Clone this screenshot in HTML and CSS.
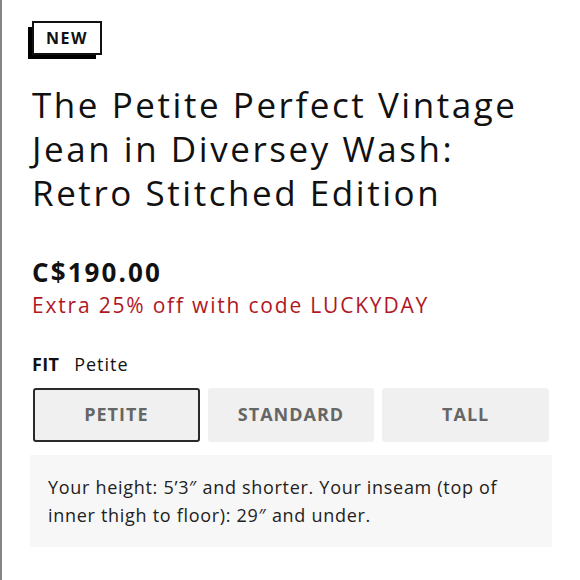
FILE: index.html
```html
<!DOCTYPE html>
<html lang="en">
<head>
<meta charset="utf-8">
<title>Product</title>
<link rel="stylesheet" href="styles.css">
</head>
<body>
<main class="page">
  <div class="badge-row"><span class="badge">NEW</span></div>
  <h1 class="title">The Petite Perfect Vintage<br>Jean in Diversey Wash:<br>Retro Stitched Edition</h1>
  <div class="price">C$190.00</div>
  <div class="promo">Extra 25% off with code LUCKYDAY</div>
  <div class="fit-label"><span class="fit-key">FIT</span><span class="fit-val">Petite</span></div>
  <div class="fit-options">
    <button class="fit-btn selected">PETITE</button>
    <button class="fit-btn">STANDARD</button>
    <button class="fit-btn">TALL</button>
  </div>
  <div class="fit-info">Your height: 5&#8217;3&#8243; and shorter. Your inseam (top of<br>inner thigh to floor): 29&#8243; and under.</div>
</main>
</body>
</html>
```
FILE: styles.css
```css
html, body {
  margin: 0;
  padding: 0;
  background: #fff;
}
body {
  font-family: "Open Sans", Lato, sans-serif;
  color: #111;
  border-left: 2px solid #858585;
  min-height: 580px;
  box-sizing: border-box;
}
.page {
  padding: 21px 30px 0 28px;
}
.badge-row {
  display: flex;
  padding-left: 2px;
}
.badge {
  display: inline-flex;
  align-items: center;
  justify-content: center;
  width: 70px;
  height: 34px;
  box-sizing: border-box;
  border: 2px solid #111;
  background: #fff;
  box-shadow: -5px 5px 0 -1px #000;
  font-weight: 700;
  font-size: 16px;
  letter-spacing: 1.6px;
  color: #111;
}
.title {
  margin: 28px 0 0 2px;
  font-weight: 400;
  font-size: 35px;
  line-height: 44px;
  letter-spacing: 2.55px;
  color: #111;
  white-space: nowrap;
}
.price {
  margin: 41px 0 0 2px;
  font-weight: 700;
  font-size: 26px;
  line-height: 32px;
  letter-spacing: 2.1px;
  color: #111;
}
.promo {
  margin: 2px 0 0 2px;
  font-size: 21px;
  line-height: 30px;
  letter-spacing: 1.8px;
  color: #b0171f;
}
.fit-label {
  margin: 32px 0 0 2px;
  font-size: 18px;
  line-height: 24px;
  display: flex;
  gap: 15px;
}
.fit-key {
  font-weight: 700;
  letter-spacing: 0.3px;
}
.fit-val {
  letter-spacing: 1px;
}
.fit-options {
  margin: 12px 0 0 3px;
  display: grid;
  grid-template-columns: 1fr 1fr 1fr;
  gap: 8px;
  width: 516px;
}
.fit-btn {
  height: 54px;
  border: none;
  border-radius: 3px;
  background: #f0f0f0;
  color: #666;
  font-family: "Open Sans", Lato, sans-serif;
  font-weight: 700;
  font-size: 18px;
  letter-spacing: 1px;
  padding: 0 0 2px;
}
.fit-btn.selected {
  border: 2px solid #2a2a2a;
}
.fit-info {
  margin: 13px 0 0 0;
  width: 522px;
  box-sizing: border-box;
  background: #f7f7f7;
  padding: 18px 18px;
  font-size: 18px;
  line-height: 28px;
  letter-spacing: 0.7px;
  color: #222;
  white-space: nowrap;
}
```
